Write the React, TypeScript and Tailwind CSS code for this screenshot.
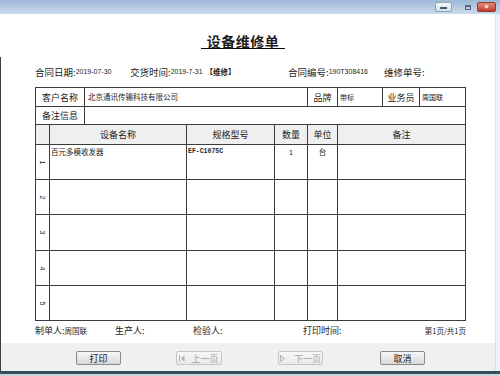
import React from "react";

const cell =
  "border-r border-b border-[#3c3c3c] flex overflow-hidden whitespace-nowrap";

function RowNum({ n }: { n: number }) {
  return (
    <div className={cell + " w-[14px] items-center justify-center"}>
      <span className="rotate-90 text-[7px] leading-none font-['Liberation_Sans',sans-serif]">
        {n}
      </span>
    </div>
  );
}

function Btn({
  label,
  disabled,
  icon,
  className,
}: {
  label: string;
  disabled?: boolean;
  icon?: "prev" | "next";
  className: string;
}) {
  return (
    <div
      className={
        "h-[14px] rounded-[2px] border flex items-center justify-center text-[9px] leading-none " +
        (disabled
          ? "border-[#c6c6c6] bg-linear-to-b from-[#f7f7f7] to-[#e9e9e9] text-[#a6a6a6] "
          : "border-[#8a8a8a] bg-linear-to-b from-[#f7f7f7] to-[#d9d9d9] text-[#1a1a1a] ") +
        className
      }
    >
      {icon === "prev" && (
        <svg width="6" height="7" viewBox="0 0 6 7" className="mr-[6px]">
          <rect x="0" y="0" width="1" height="7" fill="#b5b5b5" />
          <path d="M5.5 0.5 L1.8 3.5 L5.5 6.5 Z" fill="#b0b0b0" />
        </svg>
      )}
      {icon === "next" && (
        <svg width="6" height="7" viewBox="0 0 6 7" className="mr-[8px]">
          <path d="M0.5 0.5 L4.5 3.5 L0.5 6.5 Z" fill="none" stroke="#b0b0b0" strokeWidth="1" />
        </svg>
      )}
      <span>{label}</span>
    </div>
  );
}

export default function App() {
  const rowH = ["h-[35px]", "h-[35px]", "h-[36px]", "h-[35px]", "h-[35px]"];
  return (
    <div className="w-[500px] h-[376px] overflow-hidden flex flex-col bg-white text-[#1c1c1c] font-['Noto_Sans_CJK_SC','Noto_Sans',sans-serif]">
      {/* title bar */}
      <div className="h-[14px] shrink-0 flex items-center bg-linear-to-b from-[#9db7d6] to-[#cddcec]">
        <div className="ml-auto w-[17px] h-[10px] rounded-[2px] border border-[#8ea2b8] bg-linear-to-b from-[#f3f7fb] to-[#d4e0ec] flex items-end justify-center pb-[2px]">
          <div className="w-[7px] h-[2px] bg-[#4a5a6a]" />
        </div>
        <div className="ml-[11px] w-[9px] h-[9px] flex items-center justify-center">
          <div className="w-[6px] h-[5px] border border-[#56677a] border-t-2" />
        </div>
        <div className="ml-[5px] mr-[4px] w-[19px] h-[10px] rounded-[2px] border border-[#8a3a30] bg-linear-to-b from-[#e48a78] to-[#c23a28] flex items-center justify-center text-white text-[8px] font-bold leading-none font-['Liberation_Sans',sans-serif]">
          ×
        </div>
      </div>

      {/* middle */}
      <div className="flex-1 min-h-0 flex relative">
        <div className="absolute left-0 top-[43px] bottom-0 w-px bg-[#3a4046]" />
        <div className="w-[495px] flex flex-col">
          <div className="flex-1 min-h-0 flex flex-col">
            {/* heading */}
            <div className="mt-[20px] flex justify-center pr-[9px]">
              <span className="px-[6px] border-b border-black text-[14px] leading-[14px] font-bold tracking-[0.5px]">
                设备维修单
              </span>
            </div>

            {/* info row */}
            <div className="mt-[17px] h-[12px] flex items-center pl-[35px] text-[9.5px] leading-[12px] whitespace-nowrap">
              <div className="w-[95px] flex items-center">
                <span>合同日期:</span>
                <span className="text-[7px] font-['Liberation_Sans',sans-serif]">2019-07-30</span>
              </div>
              <div className="w-[158px] flex items-center">
                <span>交货时间:</span>
                <span className="text-[7px] font-['Liberation_Sans',sans-serif]">2019-7-31</span>
                <span className="ml-[3px] text-[7.5px] font-bold">【维修】</span>
              </div>
              <div className="w-[96px] flex items-center">
                <span>合同编号:</span>
                <span className="text-[7px] font-['Liberation_Sans',sans-serif]">190T308416</span>
              </div>
              <div className="flex items-center">
                <span>维修单号:</span>
              </div>
            </div>

            {/* table */}
            <div className="mt-[9px] ml-[35px] w-[431px] border-l border-t border-[#3c3c3c] text-[9px] leading-none">
              <div className="flex h-[19px]">
                <div className={cell + " w-[49px] items-center justify-center"}>客户名称</div>
                <div className={cell + " w-[223px] items-center pl-[3px] text-[7.5px]"}>北京通讯传输科技有限公司</div>
                <div className={cell + " w-[30px] items-center justify-center"}>品牌</div>
                <div className={cell + " w-[45px] items-center pl-[2px] text-[7px]"}>带标</div>
                <div className={cell + " w-[37px] items-center justify-center"}>业务员</div>
                <div className={cell + " w-[46px] items-center pl-[2px] text-[7px]"}>周国联</div>
              </div>
              <div className="flex h-[18px]">
                <div className={cell + " w-[49px] items-center justify-center"}>备注信息</div>
                <div className={cell + " w-[381px]"} />
              </div>
              <div className="flex h-[20px] bg-[#efefef]">
                <div className={cell + " w-[14px]"} />
                <div className={cell + " w-[137px] items-center justify-center"}>设备名称</div>
                <div className={cell + " w-[88px] items-center justify-center"}>规格型号</div>
                <div className={cell + " w-[33px] items-center justify-center"}>数量</div>
                <div className={cell + " w-[30px] items-center justify-center"}>单位</div>
                <div className={cell + " w-[128px] items-center justify-center"}>备注</div>
              </div>
              {[1, 2, 3, 4, 5].map((n, i) => (
                <div key={n} className={"flex " + rowH[i]}>
                  <RowNum n={n} />
                  <div className={cell + " w-[137px] items-start pt-[3px] pl-[1px] text-[7.5px]"}>
                    {n === 1 ? "百元多模收发器" : ""}
                  </div>
                  <div className={cell + " w-[88px] items-start pt-[4px] pl-[1px] text-[6.5px] font-['Liberation_Mono',monospace] font-bold"}>
                    {n === 1 ? "EF-C107SC" : ""}
                  </div>
                  <div className={cell + " w-[33px] justify-center pt-[4px] text-[7px] font-['Liberation_Sans',sans-serif]"}>
                    {n === 1 ? "1" : ""}
                  </div>
                  <div className={cell + " w-[30px] justify-center pt-[3px] text-[7.5px]"}>
                    {n === 1 ? "台" : ""}
                  </div>
                  <div className={cell + " w-[128px]"} />
                </div>
              ))}
            </div>

            {/* footer */}
            <div className="mt-[4px] h-[12px] w-[466px] pl-[35px] flex items-center text-[9px] leading-[12px] whitespace-nowrap">
              <div className="w-[80px] flex items-center">
                <span>制单人:</span>
                <span className="text-[7.5px]">周国联</span>
              </div>
              <div className="w-[78px]">生产人:</div>
              <div className="w-[110px]">检验人:</div>
              <div>打印时间:</div>
              <div className="ml-auto text-[7.5px]">第1页/共1页</div>
            </div>
          </div>

          {/* button bar */}
          <div className="h-[28px] shrink-0 bg-[#f0f0f0] flex items-start pt-[8px]">
            <Btn label="打印" className="ml-[76px] w-[45px]" />
            <Btn label="上一页" disabled icon="prev" className="ml-[55px] w-[46px]" />
            <Btn label="下一页" disabled icon="next" className="ml-[56px] w-[45px]" />
            <Btn label="取消" className="ml-[57px] w-[45px]" />
          </div>
        </div>
        <div className="flex-1 bg-[#eef2f6] border-l border-[#dbe2ea]" />
      </div>

      {/* bottom frame */}
      <div className="h-[5px] shrink-0 flex flex-col">
        <div className="h-[3px] bg-[#34505c]" />
        <div className="h-[2px] bg-[#c9d6dd]" />
      </div>
    </div>
  );
}
